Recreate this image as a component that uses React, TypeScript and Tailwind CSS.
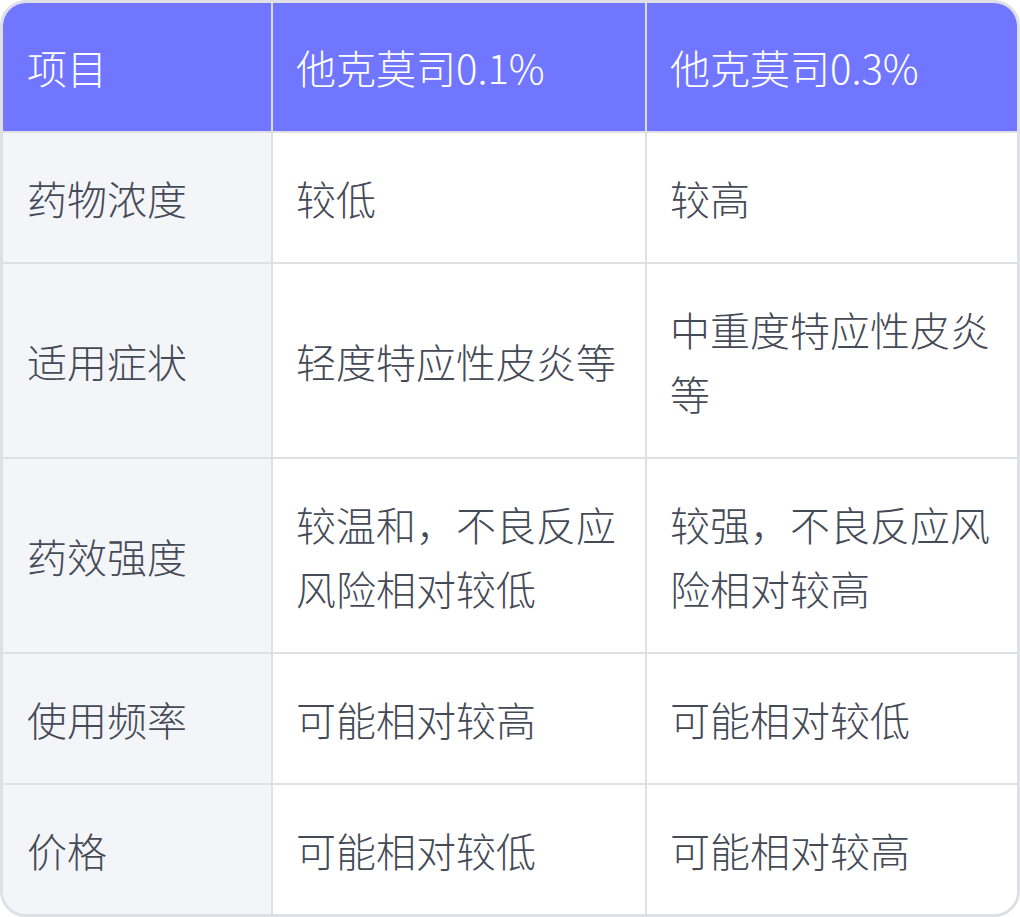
import React from "react";

const rows: [string, string, string][] = [
  ["药物浓度", "较低", "较高"],
  ["适用症状", "轻度特应性皮炎等", "中重度特应性皮炎等"],
  ["药效强度", "较温和，不良反应风险相对较低", "较强，不良反应风险相对较高"],
  ["使用频率", "可能相对较高", "可能相对较低"],
  ["价格", "可能相对较低", "可能相对较高"],
];

export default function App() {
  return (
    <div
      className="w-[1020px] h-[917px] bg-white"
      style={{ fontFamily: '"Noto Sans CJK SC", "Noto Sans", sans-serif' }}
    >
      <div className="w-full rounded-[26px] border-[3px] border-[#dfe0e5] overflow-hidden">
        <table className="w-full table-fixed border-collapse text-[40px] leading-[64px] font-light">
          <colgroup>
            <col className="w-[269px]" />
            <col className="w-[374px]" />
            <col />
          </colgroup>
          <thead>
            <tr className="bg-[#7076ff] text-white">
              <th className="text-left font-light pl-[24px] pr-[20px] py-[32px] border-r-2 border-[#dcdde3]">项目</th>
              <th className="text-left font-light pl-[23px] pr-[20px] py-[32px] border-r-2 border-[#dcdde3]">他克莫司0.1%</th>
              <th className="text-left font-light pl-[23px] pr-[20px] py-[32px]">他克莫司0.3%</th>
            </tr>
          </thead>
          <tbody className="text-[#454a57]">
            {rows.map((r, i) => (
              <tr key={i} className="border-t-2 border-[#dfe0e5]">
                <td className="bg-[#f4f5f9] pl-[24px] pr-[20px] py-[32.5px] border-r-2 border-[#dfe0e5] align-middle">{r[0]}</td>
                <td className="bg-white pl-[23px] pr-[20px] py-[32.5px] border-r-2 border-[#dfe0e5] align-middle">{r[1]}</td>
                <td className="bg-white pl-[23px] pr-[20px] py-[32.5px] align-middle">{r[2]}</td>
              </tr>
            ))}
          </tbody>
        </table>
      </div>
    </div>
  );
}
